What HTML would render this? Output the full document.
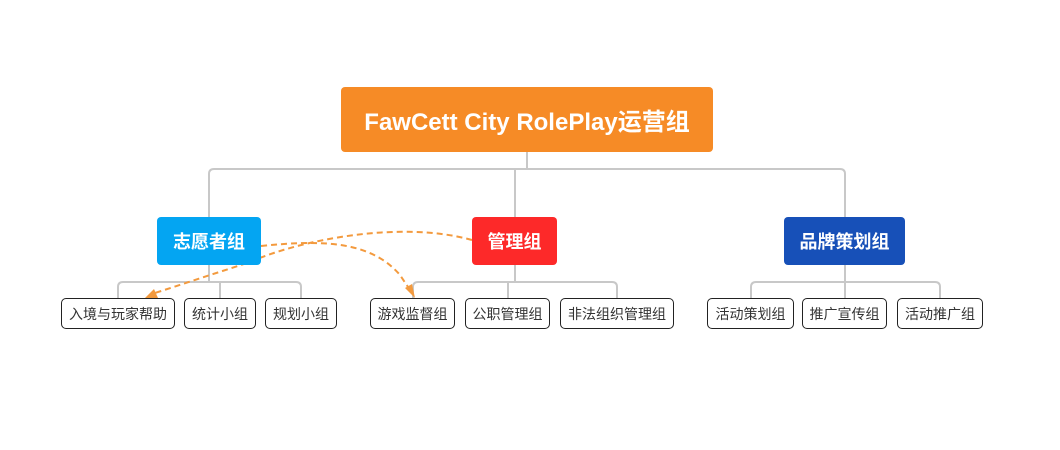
<!DOCTYPE html><html><head><style>
body{margin:0;width:1060px;height:450px;background:#fff;position:relative;overflow:hidden;font-family:"Liberation Sans","Noto Sans CJK SC",sans-serif}
.b{position:absolute;display:flex;align-items:center;justify-content:center;color:#fff;font-weight:bold;border-radius:4px}
.l{position:absolute;top:298px;height:31px;border:1px solid #222;border-radius:5px;box-sizing:border-box;display:flex;align-items:center;justify-content:center;font-size:14px;color:#333;background:#fff}
</style></head><body>
<svg width="1060" height="450" style="position:absolute;left:0;top:0">
<g fill="none" stroke="#c8c8c8" stroke-width="2">
<path d="M527 152V169M209 217V174Q209 169 214 169H840Q845 169 845 174V217M515 169V217"/>
<path d="M209 265V282M118 298V287Q118 282 123 282H296Q301 282 301 287V298M220 282V298"/>
<path d="M515 265V282M413 298V287Q413 282 418 282H612Q617 282 617 287V298M508 282V298"/>
<path d="M845 265V282M751 298V287Q751 282 756 282H935Q940 282 940 287V298M845 282V298"/>
</g>
<g fill="none" stroke="#f39a3e" stroke-width="2" stroke-dasharray="6 4">
<path d="M261 246C320 240 370 240 400 275L410 290"/>
<path d="M472 240C400 220 300 240 250 262L152 294"/>
</g>
<path d="M405 288L415 298L412 284Z" fill="#f39a3e"/>
<path d="M154 289L145 298L158 298Z" fill="#f39a3e"/>
</svg>
<div class="b" style="left:341px;top:87px;width:372px;height:65px;background:#f68b26;font-size:24px">FawCett City RolePlay运营组</div>
<div class="b" style="left:157px;top:217px;width:104px;height:48px;background:#04a5f2;font-size:18px">志愿者组</div>
<div class="b" style="left:472px;top:217px;width:85px;height:48px;background:#fd2929;font-size:18px">管理组</div>
<div class="b" style="left:784px;top:217px;width:121px;height:48px;background:#1750b8;font-size:18px">品牌策划组</div>
<div class="l" style="left:61px;width:114px">入境与玩家帮助</div>
<div class="l" style="left:184px;width:72px">统计小组</div>
<div class="l" style="left:265px;width:72px">规划小组</div>
<div class="l" style="left:370px;width:85px">游戏监督组</div>
<div class="l" style="left:465px;width:85px">公职管理组</div>
<div class="l" style="left:560px;width:114px">非法组织管理组</div>
<div class="l" style="left:707px;width:87px">活动策划组</div>
<div class="l" style="left:802px;width:85px">推广宣传组</div>
<div class="l" style="left:897px;width:86px">活动推广组</div>
</body></html>
